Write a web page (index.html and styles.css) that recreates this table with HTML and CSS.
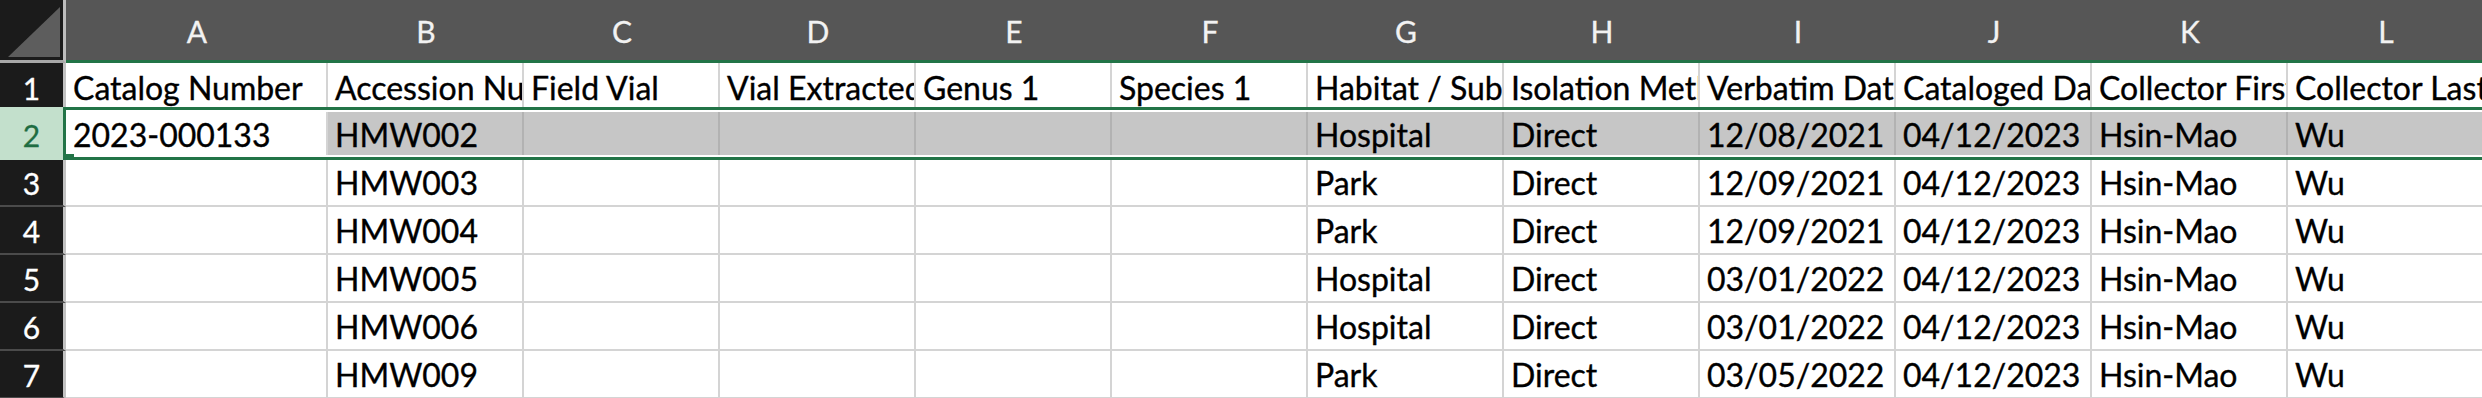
FILE: index.html
```html
<!DOCTYPE html>
<html lang="en">
<head>
<meta charset="utf-8">
<title>Sheet</title>
<link rel="stylesheet" href="styles.css">
</head>
<body>
<div class="sheet">
  <div class="row head">
    <div class="corner"><svg width="63" height="60" viewBox="0 0 63 60"><polygon points="8,57 60,57 60,7" fill="#5d5d5d"/></svg></div>
    <div class="cols">
      <div class="ch a">A</div><div class="ch">B</div><div class="ch">C</div><div class="ch">D</div><div class="ch">E</div><div class="ch">F</div><div class="ch">G</div><div class="ch">H</div><div class="ch">I</div><div class="ch">J</div><div class="ch">K</div><div class="ch">L</div>
    </div>
  </div>

  <div class="row r1">
    <div class="rh">1</div>
    <div class="cells">
      <div class="c a">Catalog Number</div><div class="c">Accession Number</div><div class="c">Field Vial</div><div class="c">Vial Extracted</div><div class="c">Genus 1</div><div class="c">Species 1</div><div class="c">Habitat / Substrate</div><div class="c">Isolation Method</div><div class="c">Verbatim Date</div><div class="c">Cataloged Date</div><div class="c">Collector First Name</div><div class="c">Collector Last Name</div>
    </div>
  </div>

  <div class="row sel">
    <div class="rh">2</div>
    <div class="cells">
      <div class="c a active">2023-000133</div><div class="c">HMW002</div><div class="c"></div><div class="c"></div><div class="c"></div><div class="c"></div><div class="c">Hospital</div><div class="c">Direct</div><div class="c">12/08/2021</div><div class="c">04/12/2023</div><div class="c">Hsin-Mao</div><div class="c">Wu</div>
      <div class="handle"></div>
    </div>
  </div>

  <div class="row r3">
    <div class="rh">3</div>
    <div class="cells">
      <div class="c a"></div><div class="c">HMW003</div><div class="c"></div><div class="c"></div><div class="c"></div><div class="c"></div><div class="c">Park</div><div class="c">Direct</div><div class="c">12/09/2021</div><div class="c">04/12/2023</div><div class="c">Hsin-Mao</div><div class="c">Wu</div>
    </div>
  </div>

  <div class="row">
    <div class="rh">4</div>
    <div class="cells">
      <div class="c a"></div><div class="c">HMW004</div><div class="c"></div><div class="c"></div><div class="c"></div><div class="c"></div><div class="c">Park</div><div class="c">Direct</div><div class="c">12/09/2021</div><div class="c">04/12/2023</div><div class="c">Hsin-Mao</div><div class="c">Wu</div>
    </div>
  </div>

  <div class="row">
    <div class="rh">5</div>
    <div class="cells">
      <div class="c a"></div><div class="c">HMW005</div><div class="c"></div><div class="c"></div><div class="c"></div><div class="c"></div><div class="c">Hospital</div><div class="c">Direct</div><div class="c">03/01/2022</div><div class="c">04/12/2023</div><div class="c">Hsin-Mao</div><div class="c">Wu</div>
    </div>
  </div>

  <div class="row">
    <div class="rh">6</div>
    <div class="cells">
      <div class="c a"></div><div class="c">HMW006</div><div class="c"></div><div class="c"></div><div class="c"></div><div class="c"></div><div class="c">Hospital</div><div class="c">Direct</div><div class="c">03/01/2022</div><div class="c">04/12/2023</div><div class="c">Hsin-Mao</div><div class="c">Wu</div>
    </div>
  </div>

  <div class="row">
    <div class="rh">7</div>
    <div class="cells">
      <div class="c a"></div><div class="c">HMW009</div><div class="c"></div><div class="c"></div><div class="c"></div><div class="c"></div><div class="c">Park</div><div class="c">Direct</div><div class="c">03/05/2022</div><div class="c">04/12/2023</div><div class="c">Hsin-Mao</div><div class="c">Wu</div>
    </div>
  </div>
</div>
</body>
</html>
```

FILE: styles.css
```css
html, body {
  margin: 0;
  padding: 0;
  background: #ffffff;
}
body {
  width: 2482px;
  height: 398px;
  overflow: hidden;
  font-family: Lato, "Open Sans", "Liberation Sans", sans-serif;
}
.sheet {
  display: flex;
  flex-direction: column;
  width: 2482px;
}
.row {
  display: flex;
  flex: none;
}

/* header row */
.corner {
  flex: none;
  width: 63px;
  height: 60px;
  background: #1b1b1b;
  border-right: 3px solid #bdbdbd;
  border-bottom: 3px solid #a8a8a8;
}
.corner svg { display: block; }
.cols {
  display: flex;
  flex: 1;
  height: 60px;
  background: #565656;
  border-bottom: 3px solid #227447;
  overflow: hidden;
}
.ch {
  flex: none;
  width: 196px;
  box-sizing: border-box;
  display: flex;
  align-items: flex-end;
  justify-content: center;
  padding-bottom: 11px;
  color: #f2f2f2;
  font-size: 30px;
  line-height: 36px;
  -webkit-text-stroke: 0.3px #f2f2f2;
}
.ch.a { width: 262px; }

/* row headers */
.rh {
  flex: none;
  width: 66px;
  box-sizing: border-box;
  background: #1b1b1b;
  border-right: 3px solid #c2c2c2;
  border-bottom: 2px solid #4b4b4b;
  color: #ffffff;
  font-size: 30px;
  line-height: 36px;
  display: flex;
  align-items: flex-end;
  justify-content: center;
  padding-bottom: 4px;
  -webkit-text-stroke: 0.3px #ffffff;
}

/* cells */
.cells {
  display: flex;
  flex: 1;
  overflow: hidden;
  position: relative;
}
.c {
  flex: none;
  width: 196px;
  height: 48px;
  box-sizing: border-box;
  border-right: 2px solid #d4d4d4;
  border-bottom: 2px solid #d4d4d4;
  padding: 0 0 3px 7px;
  display: flex;
  align-items: flex-end;
  overflow: hidden;
  white-space: nowrap;
  font-size: 32px;
  line-height: 38px;
  color: #000000;
  -webkit-text-stroke: 0.35px #000000;
}
.c.a { width: 262px; }

.r1 .rh {
  border-bottom: none;
  padding-bottom: 1px;
}
.r1 .c {
  height: 44px;
  border-bottom: none;
  padding-bottom: 0;
}

.r3 .c { height: 47px; }
.r3 .rh { height: 47px; }

/* selected row */
.sel .rh {
  background: #c3e0cc;
  color: #1f6d42;
  border-right: 3px solid #227447;
  border-bottom: none;
  padding-bottom: 7px;
  -webkit-text-stroke: 0.3px #1f6d42;
}
.sel .cells {
  border-top: 3px solid #227447;
  border-bottom: 3px solid #227447;
  padding: 2px 0;
  background: #ffffff;
}
.sel .c {
  height: 43px;
  border-bottom: none;
  border-right-color: #b2b2b2;
  background: #c6c6c6;
  padding-bottom: 1px;
}
.sel .c.active {
  background: #ffffff;
  border-right-color: #d4d4d4;
}
.handle {
  position: absolute;
  left: -3px;
  top: 44px;
  width: 11px;
  height: 10px;
  background: #227447;
  box-shadow: 2px 0 0 #ffffff;
}
```
